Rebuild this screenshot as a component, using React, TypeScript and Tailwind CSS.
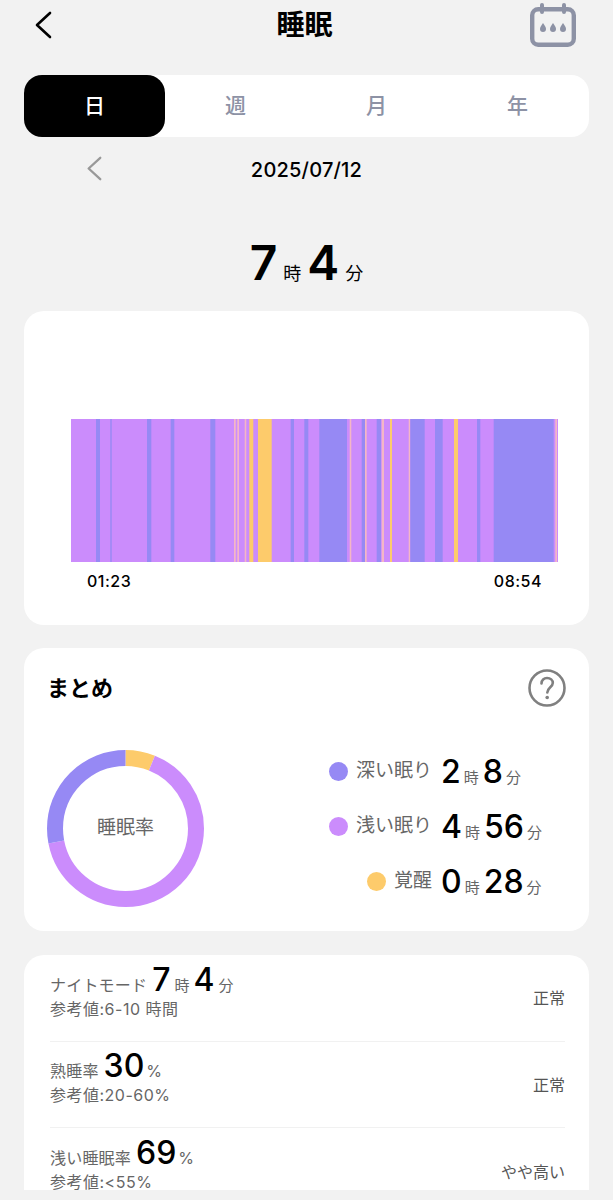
const FONT = "font-['Inter','Noto_Sans_CJK_JP',sans-serif]";

const DEEP = "#9689f4";
const LIGHT = "#cb8cfc";
const AWAKE = "#fdcb6b";
const PALE = "#f4b6c6";

// [x from, x to, colour], in chart pixels (chart starts at x=71 on the page)
const stages: [number, number, string][] = [
  [96, 100, DEEP],
  [110.3, 111.7, DEEP],
  [147, 151.3, DEEP],
  [170.7, 174.3, DEEP],
  [210.3, 215.3, DEEP],
  [234, 235.7, PALE],
  [237.3, 239, PALE],
  [244.7, 246.3, PALE],
  [249.3, 253.3, AWAKE],
  [258, 271.7, AWAKE],
  [290.7, 294, DEEP],
  [304.3, 308.3, DEEP],
  [319.3, 347, DEEP],
  [349.7, 351.3, PALE],
  [361.7, 365, DEEP],
  [365, 366.7, PALE],
  [376.7, 381, DEEP],
  [381.7, 384, PALE],
  [390, 392, AWAKE],
  [408.7, 410.3, PALE],
  [410.3, 424.7, DEEP],
  [435, 442.7, DEEP],
  [454, 458, AWAKE],
  [477, 480.3, DEEP],
  [493.7, 553.7, DEEP],
  [555.3, 557, PALE],
];

const legend = [
  { color: "bg-[#9689f4]", label: "深い眠り", hours: "2", minutes: "8" },
  { color: "bg-[#cb8cfc]", label: "浅い眠り", hours: "4", minutes: "56" },
  { color: "bg-[#fdcb6b]", label: "覚醒", hours: "0", minutes: "28" },
];

function Chevron({ className }: { className: string }) {
  return (
    <svg viewBox="0 0 20 28" fill="none" className={className}>
      <path d="M17 2 L4 14 L17 26" stroke="currentColor" strokeWidth="2.6" strokeLinecap="round" strokeLinejoin="round" />
    </svg>
  );
}

function CalendarIcon() {
  return (
    <svg viewBox="0 0 46 44" className="h-[44px] w-[46px]" fill="none">
      <rect x="2.2" y="6.2" width="41.6" height="35.6" rx="6" stroke="#8d92a5" strokeWidth="4.4" />
      <path d="M12 2 V9 M34 2 V9" stroke="#8d92a5" strokeWidth="4" strokeLinecap="round" />
      <path d="M13 20 C11 23 10 24 10 26 A3 3 0 0 0 16 26 C16 24 15 23 13 20 Z" fill="#8d92a5" />
      <path d="M23 20 C21 23 20 24 20 26 A3 3 0 0 0 26 26 C26 24 25 23 23 20 Z" fill="#8d92a5" />
      <path d="M33 20 C31 23 30 24 30 26 A3 3 0 0 0 36 26 C36 24 35 23 33 20 Z" fill="#8d92a5" />
    </svg>
  );
}

function HelpIcon() {
  return (
    <svg viewBox="0 0 38 38" className="h-[38px] w-[38px]" fill="none">
      <circle cx="19" cy="19" r="17.5" stroke="#808080" strokeWidth="2.6" />
      <path d="M13.5 14.5 C13.5 11 16 9 19 9 C22.5 9 24.8 11.2 24.8 14 C24.8 18 19.3 18.5 19.3 23.5" stroke="#808080" strokeWidth="2.6" strokeLinecap="round" />
      <circle cx="19.2" cy="28.5" r="1.8" fill="#808080" />
    </svg>
  );
}

function Donut() {
  const r = 70.5;
  return (
    <svg viewBox="0 0 157 157" className="h-[157px] w-[157px] -rotate-90" fill="none">
      <circle cx="78.5" cy="78.5" r={r} pathLength={360} stroke={AWAKE} strokeWidth="16" strokeDasharray="22 338" />
      <circle cx="78.5" cy="78.5" r={r} pathLength={360} stroke={LIGHT} strokeWidth="16" strokeDasharray="237 123" strokeDashoffset="-22" />
      <circle cx="78.5" cy="78.5" r={r} pathLength={360} stroke={DEEP} strokeWidth="16" strokeDasharray="101 259" strokeDashoffset="-259" />
    </svg>
  );
}

function Metric({ label, value, reference, status }: { label: string; value: React.ReactNode; reference: string; status: string }) {
  return (
    <div className="flex h-[86.5px] items-center justify-between border-b border-[#f1f1f1] last:border-b-0">
      <div className="-mt-[13px]">
        <div className="flex h-[34px] items-baseline">
          <span className="mr-[5px] text-[16px] tracking-[0.2px] text-[#666666]">{label}</span>
          {value}
        </div>
        <p className="mt-[1px] text-[16px] leading-[22px] tracking-[0.5px] text-[#666666]">{reference}</p>
      </div>
      <span className="mt-[1px] text-[16px] text-[#555555]">{status}</span>
    </div>
  );
}

function Big({ children }: { children: React.ReactNode }) {
  return <span className="text-[32px] leading-[34px] font-medium text-black">{children}</span>;
}

function Small({ children }: { children: React.ReactNode }) {
  return <span className="mx-[4px] text-[15px] text-[#666666]">{children}</span>;
}

export default function App() {
  return (
    <div className={`h-[1200px] w-[613px] bg-[#f2f2f2] pb-[10px] ${FONT}`}>
      <div className="h-full overflow-hidden">
        {/* Header */}
        <div className="grid h-[50px] grid-cols-[1fr_auto_1fr] items-center pr-[37px] pl-[33px]">
          <Chevron className="h-[28px] w-[20px] text-black" />
          <h1 className="text-[28px] font-bold text-black">睡眠</h1>
          <div className="flex justify-end">
            <CalendarIcon />
          </div>
        </div>

        {/* Tabs */}
        <div className="mx-[24px] mt-[25px] flex h-[62px] rounded-[18px] bg-white">
          <div className="flex w-[141px] items-center justify-center rounded-[18px] bg-black text-[21px] font-medium text-white">日</div>
          <div className="flex w-[141px] items-center justify-center text-[21px] font-medium text-[#8d92a5]">週</div>
          <div className="flex w-[141px] items-center justify-center text-[21px] font-medium text-[#8d92a5]">月</div>
          <div className="flex w-[141px] items-center justify-center text-[21px] font-medium text-[#8d92a5]">年</div>
        </div>

        {/* Date */}
        <div className="mt-[21px] flex h-[24px] items-center justify-center">
          <div className="relative flex w-full justify-center">
            <Chevron className="absolute top-[-2px] left-[85px] h-[25px] w-[18px] text-[#999999]" />
            <span className="text-[20px] leading-[24px] font-medium tracking-[0.2px] text-black">2025/07/12</span>
          </div>
        </div>

        {/* Total */}
        <div className="mt-[51px] flex h-[60px] items-baseline justify-center">
          <span className="text-[48px] leading-[60px] font-semibold text-black">7</span>
          <span className="mx-[6px] text-[18px] text-black">時</span>
          <span className="text-[48px] leading-[60px] font-semibold text-black">4</span>
          <span className="ml-[6px] text-[18px] text-black">分</span>
        </div>

        {/* Chart */}
        <div className="mx-[24px] mt-[18px] h-[314px] rounded-[20px] bg-white pt-[108px]">
          <svg viewBox="71 0 487 143" className="ml-[47px] h-[143px] w-[487px]" preserveAspectRatio="none">
            <rect x="71" y="0" width="487" height="143" fill={LIGHT} />
            {stages.map(([from, to, color]) => (
              <rect key={from} x={from} y="0" width={to - from} height="143" fill={color} />
            ))}
          </svg>
          <div className="mt-[9px] flex justify-between pr-[47px] pl-[63px] text-[16px] leading-[20px] font-medium tracking-[0.5px] text-black">
            <span>01:23</span>
            <span>08:54</span>
          </div>
        </div>

        {/* Summary */}
        <div className="mx-[24px] mt-[23px] h-[283px] rounded-[20px] bg-white pt-[21px] pr-[23px] pl-[23px]">
          <div className="flex items-center justify-between">
            <h2 className="text-[22px] font-semibold text-black">まとめ</h2>
            <HelpIcon />
          </div>
          <div className="mt-[41px] flex items-center">
            <div className="relative">
              <Donut />
              <span className="absolute inset-0 flex items-center justify-center text-[19px] text-[#666666]">睡眠率</span>
            </div>
            <div className="-mt-[4px] ml-[125px] flex flex-col">
              {legend.map((item) => (
                <div key={item.label} className="flex h-[55px] items-center">
                  <div className="flex w-[103px] items-center justify-end">
                    <span className={`h-[19px] w-[19px] shrink-0 rounded-full ${item.color}`} />
                    <span className="ml-[8px] text-[19px] whitespace-nowrap text-[#666666]">{item.label}</span>
                  </div>
                  <div className="ml-[9px] flex items-baseline">
                    <span className="text-[32px] leading-[44px] font-medium text-black">{item.hours}</span>
                    <span className="mr-[4px] ml-[3px] text-[15px] text-[#666666]">時</span>
                    <span className="text-[32px] leading-[44px] font-medium text-black">{item.minutes}</span>
                    <span className="ml-[3px] text-[15px] text-[#666666]">分</span>
                  </div>
                </div>
              ))}
            </div>
          </div>
        </div>

        {/* Metrics */}
        <div className="mx-[24px] mt-[24px] rounded-t-[20px] bg-white pr-[24px] pl-[26px]">
          <Metric
            label="ナイトモード"
            value={
              <>
                <Big>7</Big>
                <Small>時</Small>
                <Big>4</Big>
                <Small>分</Small>
              </>
            }
            reference="参考値:6-10 時間"
            status="正常"
          />
          <Metric
            label="熟睡率"
            value={
              <>
                <Big>30</Big>
                <span className="ml-[2px] text-[16px] text-[#666666]">%</span>
              </>
            }
            reference="参考値:20-60%"
            status="正常"
          />
          <Metric
            label="浅い睡眠率"
            value={
              <>
                <Big>69</Big>
                <span className="ml-[2px] text-[16px] text-[#666666]">%</span>
              </>
            }
            reference="参考値:<55%"
            status="やや高い"
          />
        </div>
      </div>
    </div>
  );
}
